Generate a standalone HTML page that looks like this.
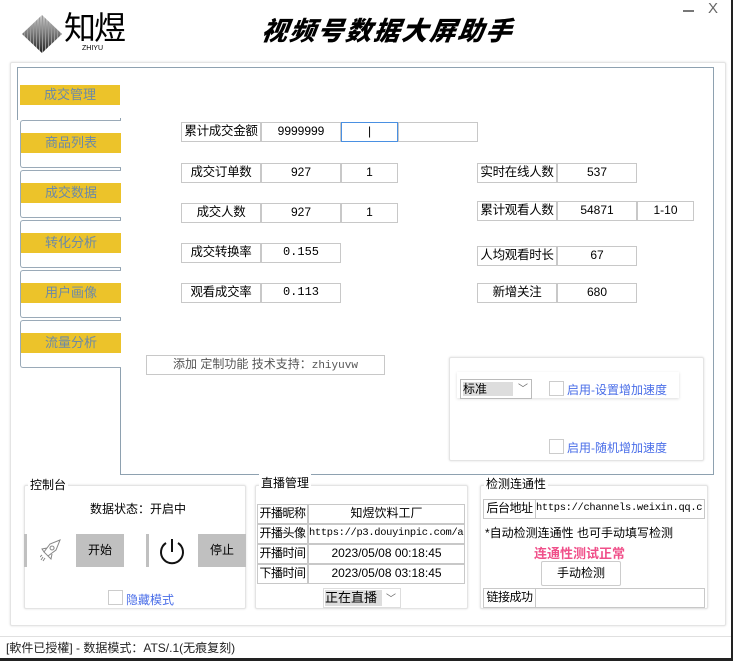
<!DOCTYPE html>
<html><head><meta charset="utf-8"><style>
*{margin:0;padding:0;box-sizing:border-box}
body{width:733px;height:661px;background:#fff;position:relative;overflow:hidden;font-family:"Liberation Sans","Noto Sans CJK SC",sans-serif;font-size:12px;color:#000}
.a{position:absolute}
.c{position:absolute;border:1px solid #c8c8c8;background:#fff;text-align:center;font-size:12px;line-height:17px;white-space:nowrap;overflow:hidden}
.lb{font-size:12.5px;letter-spacing:-0.3px}
.sl{font-size:12px;letter-spacing:-0.5px}
.tab{position:absolute;left:20px;width:101px;height:48px;border:1px solid #9aaab8;border-right:none;border-radius:3px 0 0 3px;background:#fff}
.y{position:absolute;left:0;width:100px;height:20px;background:#ecc32a;color:#6c8aa6;font-size:13px;text-align:center;line-height:20px}
.grp{position:absolute;border:1px solid #e4e4e4;border-radius:2px;box-shadow:0 0 2px #ddd;background:#fff}
.gt{position:absolute;background:#fff;font-size:12px;padding:0 2px}
.mono{font-family:"Liberation Mono","Noto Sans CJK SC",monospace;font-size:12px}
.url{font-family:"Liberation Mono",monospace;font-size:10.4px;letter-spacing:-0.3px}
.cb{position:absolute;width:15px;height:15px;border:1px solid #ccc;background:#fff}
.bl{position:absolute;color:#4a6ee8;font-size:12px}
</style></head><body>
<div class="a" style="left:0;top:658px;width:733px;height:3px;background:#222"></div>
<div class="a" style="left:731px;top:0;width:2px;height:661px;background:#222"></div>
<svg class="a" style="left:22px;top:15px" width="40" height="38" viewBox="0 0 40 38">
<defs><linearGradient id="g" x1="0" x2="0" y1="0" y2="1"><stop offset="0" stop-color="#ccc"/><stop offset="1" stop-color="#222"/></linearGradient>
<pattern id="p" width="3" height="38" patternUnits="userSpaceOnUse"><rect width="2" height="38" fill="url(#g)"/><rect x="2" width="1" height="38" fill="#999"/></pattern></defs>
<polygon points="20,0 40,19 20,38 0,19" fill="url(#p)"/></svg>
<div class="a" style="left:64px;top:6px;font-size:32px;line-height:40px;letter-spacing:-2px;font-family:'Noto Sans CJK SC',sans-serif;font-weight:400">知煜</div>
<div class="a" style="left:82px;top:45px;font-size:7px">ZHIYU</div>
<div class="a" style="left:262px;top:13px;font-size:26px;font-weight:900;font-style:italic;letter-spacing:2px;font-family:'Noto Sans CJK SC',sans-serif;line-height:34px;transform:skewX(-8deg)">视频号数据大屏助手</div>
<div class="a" style="left:683px;top:10px;width:11px;height:2px;background:#777"></div>
<div class="a" style="left:708px;top:0px;font-size:15px;color:#666">X</div>
<div class="grp" style="left:10px;top:62px;width:716px;height:564px"></div>
<div class="a" style="left:120px;top:67px;width:594px;height:408px;border:1px solid #8ea1b0;border-left:none"></div>
<div class="a" style="left:17px;top:67px;width:104px;height:1px;background:#8ea1b0"></div>
<div class="a" style="left:17px;top:67px;width:1px;height:53px;background:#8ea1b0"></div>
<div class="a" style="left:120px;top:118px;width:1px;height:357px;background:#8ea1b0"></div>
<div class="y a" style="left:20px;top:85px">成交管理</div>
<div class="tab" style="top:120px"><div class="y" style="top:12px">商品列表</div></div>
<div class="tab" style="top:170px"><div class="y" style="top:12px">成交数据</div></div>
<div class="tab" style="top:220px"><div class="y" style="top:12px">转化分析</div></div>
<div class="tab" style="top:270px"><div class="y" style="top:12px">用户画像</div></div>
<div class="tab" style="top:320px"><div class="y" style="top:12px">流量分析</div></div>
<div class="c lb" style="left:181px;top:122px;width:80px;height:20px">累计成交金额</div>
<div class="c" style="left:261px;top:122px;width:80px;height:20px">9999999</div>
<div class="c" style="left:341px;top:122px;width:57px;height:20px;border-color:#4a90e2">|</div>
<div class="c" style="left:398px;top:122px;width:80px;height:20px"></div>
<div class="c lb" style="left:181px;top:163px;width:80px;height:20px">成交订单数</div>
<div class="c" style="left:261px;top:163px;width:80px;height:20px">927</div>
<div class="c" style="left:341px;top:163px;width:57px;height:20px">1</div>
<div class="c lb" style="left:181px;top:203px;width:80px;height:20px">成交人数</div>
<div class="c" style="left:261px;top:203px;width:80px;height:20px">927</div>
<div class="c" style="left:341px;top:203px;width:57px;height:20px">1</div>
<div class="c lb" style="left:181px;top:243px;width:80px;height:20px">成交转换率</div>
<div class="c mono" style="left:261px;top:243px;width:80px;height:20px">0.155</div>
<div class="c lb" style="left:181px;top:283px;width:80px;height:20px">观看成交率</div>
<div class="c mono" style="left:261px;top:283px;width:80px;height:20px">0.113</div>
<div class="c lb" style="left:477px;top:163px;width:80px;height:20px">实时在线人数</div>
<div class="c" style="left:557px;top:163px;width:80px;height:20px">537</div>
<div class="c lb" style="left:477px;top:201px;width:80px;height:20px">累计观看人数</div>
<div class="c" style="left:557px;top:201px;width:80px;height:20px">54871</div>
<div class="c" style="left:637px;top:201px;width:57px;height:20px">1-10</div>
<div class="c lb" style="left:477px;top:246px;width:80px;height:20px">人均观看时长</div>
<div class="c" style="left:557px;top:246px;width:80px;height:20px">67</div>
<div class="c lb" style="left:477px;top:283px;width:80px;height:20px">新增关注</div>
<div class="c" style="left:557px;top:283px;width:80px;height:20px">680</div>
<div class="c" style="left:146px;top:355px;width:239px;height:20px;color:#555">添加 定制功能 技术支持：<span class="mono" style="font-size:11px">zhiyuvw</span></div>
<div class="grp" style="left:449px;top:357px;width:255px;height:104px"></div>
<div class="a" style="left:457px;top:372px;width:222px;height:26px;box-shadow:0 1px 3px #ddd;background:#fff"></div>
<div class="a" style="left:460px;top:379px;width:72px;height:20px;border:1px solid #bbb;background:#fff"><div class="a" style="left:2px;top:2px;width:50px;height:14px;background:#ddd;font-size:12px;line-height:14px">标准</div><div class="a" style="left:57px;top:0px;font-size:10px;color:#666">﹀</div></div>
<div class="cb" style="left:549px;top:381px"></div><div class="bl" style="left:567px;top:381px">启用-设置增加速度</div>
<div class="cb" style="left:549px;top:439px"></div><div class="bl" style="left:567px;top:439px">启用-随机增加速度</div>
<div class="grp" style="left:24px;top:485px;width:222px;height:124px"></div>
<div class="gt" style="left:28px;top:476px">控制台</div>
<div class="a" style="left:90px;top:500px;font-size:12px">数据状态：开启中</div>
<div class="a" style="left:24px;top:534px;width:3px;height:33px;background:#c0c0c0"></div>
<svg class="a" style="left:40px;top:538px" width="22" height="24" viewBox="0 0 22 24" fill="none" stroke="#888" stroke-width="1"><path d="M20 2 L10 6 L4 14 L8 18 L16 12 Z M7 10 L2 11 L4 14 M12 16 L11 21 L8 18 M12 8 a2 2 0 1 0 .1 0 M3 19 L1 22 M5 20 L3 23 M2 17 L0 19"/></svg>
<div class="a" style="left:76px;top:534px;width:48px;height:33px;background:#c0c0c0;text-align:center;line-height:33px">开始</div>
<div class="a" style="left:146px;top:534px;width:3px;height:33px;background:#c0c0c0"></div>
<svg class="a" style="left:158px;top:537px" width="28" height="30" viewBox="0 0 28 30" fill="none" stroke="#111" stroke-width="2"><path d="M8 6 A11 11 0 1 0 20 6"/><path d="M14 2 V15"/></svg>
<div class="a" style="left:198px;top:534px;width:48px;height:33px;background:#c0c0c0;text-align:center;line-height:33px">停止</div>
<div class="cb" style="left:108px;top:590px"></div><div class="bl" style="left:126px;top:591px">隐藏模式</div>
<div class="grp" style="left:255px;top:485px;width:213px;height:124px"></div>
<div class="gt" style="left:259px;top:474px">直播管理</div>
<div class="c sl" style="left:257px;top:504px;width:51px;height:20px">开播昵称</div>
<div class="c" style="left:308px;top:504px;width:157px;height:20px">知煜饮料工厂</div>
<div class="c sl" style="left:257px;top:524px;width:51px;height:20px">开播头像</div>
<div class="c url" style="left:308px;top:524px;width:157px;height:20px;text-align:left">https://p3.douyinpic.com/a</div>
<div class="c sl" style="left:257px;top:544px;width:51px;height:20px">开播时间</div>
<div class="c" style="left:308px;top:544px;width:157px;height:20px">2023/05/08 00:18:45</div>
<div class="c sl" style="left:257px;top:564px;width:51px;height:20px">下播时间</div>
<div class="c" style="left:308px;top:564px;width:157px;height:20px">2023/05/08 03:18:45</div>
<div class="a" style="left:323px;top:588px;width:78px;height:20px;border:1px solid #ddd"><div class="a" style="left:1px;top:1px;width:57px;height:16px;background:#ddd;font-size:13px;line-height:16px">正在直播</div><div class="a" style="left:62px;top:1px;font-size:10px;color:#666">﹀</div></div>
<div class="grp" style="left:480px;top:485px;width:228px;height:124px"></div>
<div class="gt" style="left:484px;top:475px">检测连通性</div>
<div class="c sl" style="left:483px;top:499px;width:53px;height:20px">后台地址</div>
<div class="c url" style="left:535px;top:499px;width:170px;height:20px;text-align:left">https://channels.weixin.qq.c</div>
<div class="a" style="left:485px;top:524px;font-size:12px">*自动检测连通性 也可手动填写检测</div>
<div class="a" style="left:534px;top:543px;font-size:13px;font-weight:bold;color:#f0508a">连通性测试正常</div>
<div class="a" style="left:541px;top:561px;width:80px;height:25px;border:1px solid #ccc;border-radius:2px;text-align:center;line-height:23px;font-size:12px">手动检测</div>
<div class="c sl" style="left:483px;top:588px;width:53px;height:20px">链接成功</div>
<div class="c" style="left:535px;top:588px;width:170px;height:20px"></div>
<div class="a" style="left:0;top:636px;width:731px;height:1px;background:#e0e0e0"></div>
<div class="a" style="left:6px;top:639px;font-size:12px;color:#222">[軟件已授權] - 数据模式：ATS/.1(无痕复刻)</div>
</body></html>
